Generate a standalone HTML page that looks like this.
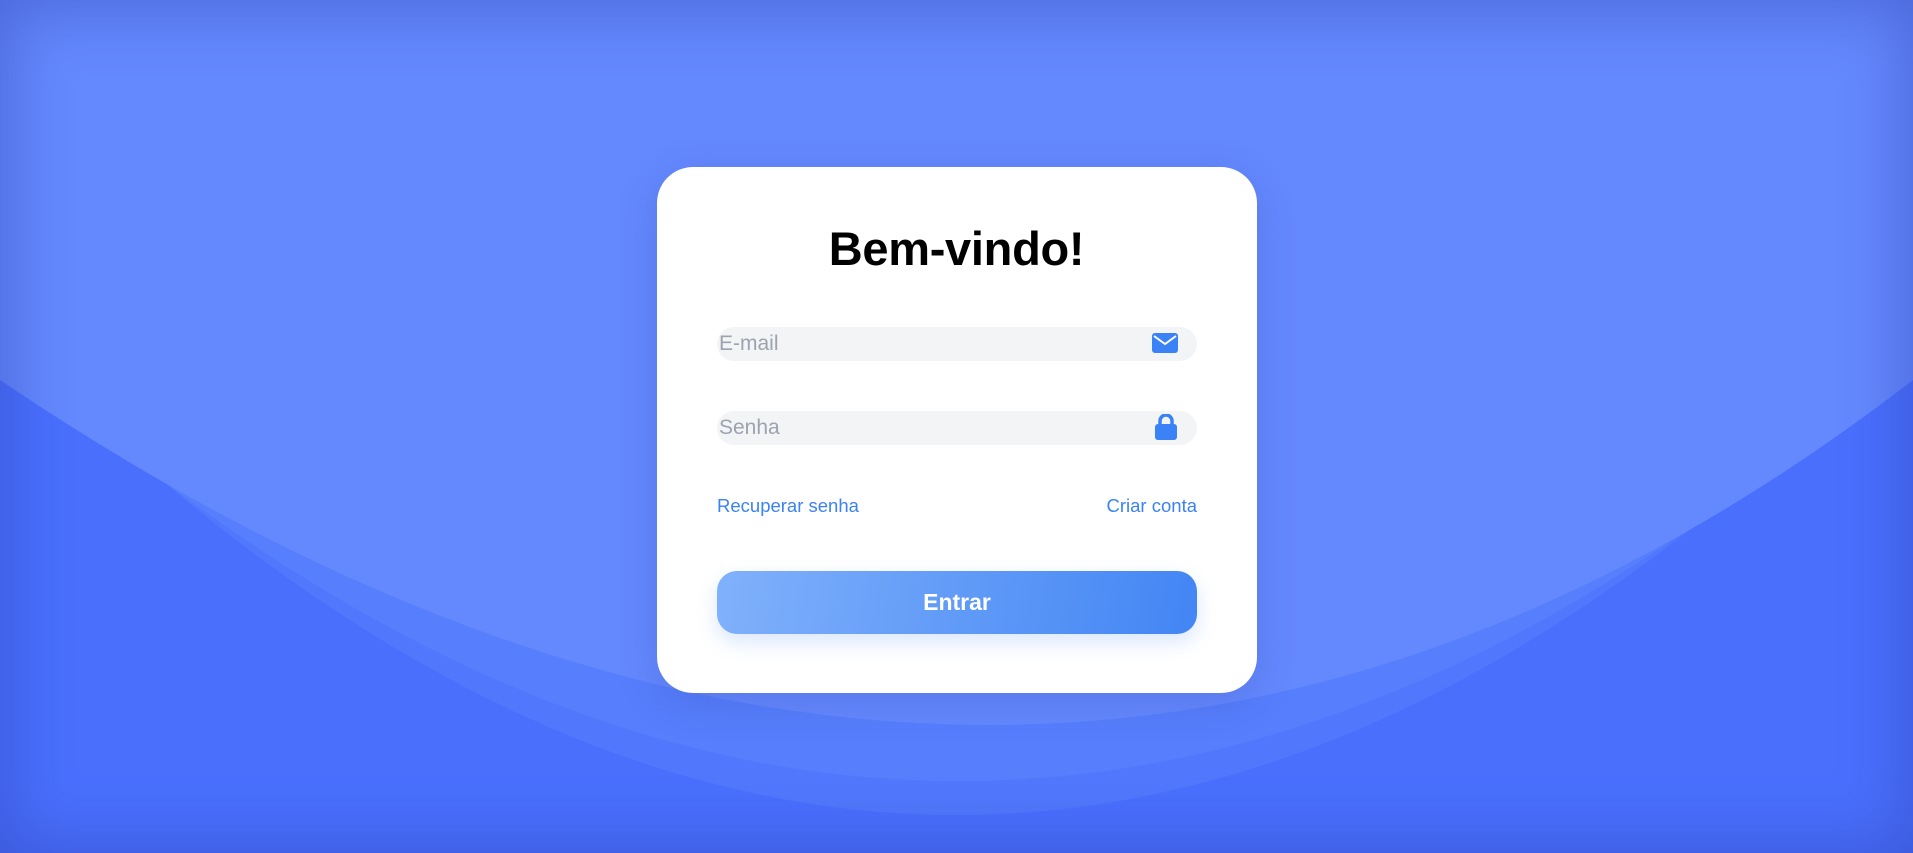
<!DOCTYPE html>
<html><head><meta charset="utf-8"><style>
html,body{margin:0;padding:0;width:1913px;height:853px;overflow:hidden;font-family:"Liberation Sans",sans-serif}
.bg{position:absolute;inset:0}
.vig{position:absolute;inset:0;box-shadow:inset 0 0 60px 10px rgba(40,60,170,0.4)}
.card{position:absolute;left:657px;top:167px;width:600px;height:526px;background:#fff;border-radius:36px;box-shadow:0 10px 40px rgba(40,60,160,0.2)}
h1{position:absolute;left:0;right:0;top:221px;margin:0;text-align:center;font-size:47px;font-weight:bold;color:#000;letter-spacing:-0.3px}
.inp{position:absolute;left:717px;width:480px;height:34px;border-radius:17px;background:#f3f4f6}
.inp span{position:absolute;left:2px;top:5px;font-size:21px;color:#9ca3af}
.inp svg{position:absolute}
.link{position:absolute;top:495px;font-size:18.5px;color:#3b82f6}
.btn{position:absolute;left:717px;top:571px;width:480px;height:63px;border-radius:20px;background:linear-gradient(100deg,#80b1fb,#4285f4);box-shadow:0 8px 20px rgba(66,133,244,0.2);color:#fff;font-weight:bold;font-size:23px;text-align:center;line-height:63px}
</style></head><body>
<svg class="bg" width="1913" height="853" viewBox="0 0 1913 853">
<rect width="1913" height="853" fill="#4a6ffd"/>
<path d="M0,330 Q956,1300 1913,330 L1913,0 L0,0Z" fill="#5178fc"/>
<path d="M0,345 Q956,1215 1913,350 L1913,0 L0,0Z" fill="#577efc"/>
<path d="M0,380 Q1020,1070 1913,380 L1913,0 L0,0Z" fill="#6488fd"/>
</svg>
<div class="vig"></div>
<div class="card"></div>
<h1>Bem-vindo!</h1>
<div class="inp" style="top:327px"><span>E-mail</span>
<svg style="left:435px;top:6px" width="26" height="20" viewBox="0 0 26 20"><rect x="0" y="0" width="26" height="20" rx="3" fill="#3b82f6"/><path d="M2,3 L13,11 L24,3" stroke="#fff" stroke-width="2" fill="none"/></svg></div>
<div class="inp" style="top:411px"><span>Senha</span>
<svg style="left:438px;top:3px" width="22" height="26" viewBox="0 0 22 26"><path d="M5,11 V7 a6,6 0 0 1 12,0 V11" stroke="#3b82f6" stroke-width="3.5" fill="none"/><rect x="0" y="10" width="22" height="16" rx="3" fill="#3b82f6"/></svg></div>
<div class="link" style="left:717px">Recuperar senha</div>
<div class="link" style="right:716px">Criar conta</div>
<div class="btn">Entrar</div>
</body></html>
